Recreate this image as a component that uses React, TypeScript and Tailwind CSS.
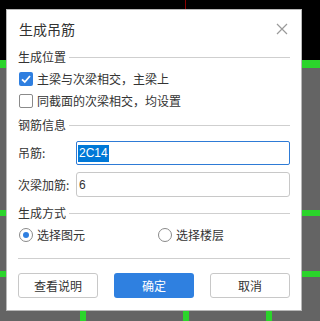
import React from "react";

const font = { fontFamily: '"Noto Sans CJK SC", "Microsoft YaHei", sans-serif' };

function Section({ title }: { title: string }) {
  return (
    <div className="flex items-center h-[18px]">
      <span className="text-[12px] leading-none text-[#333]">{title}</span>
      <div className="flex-1 h-px bg-[#cfcfcf] ml-[3px]" />
    </div>
  );
}

function Checkbox({ checked, label }: { checked?: boolean; label: string }) {
  return (
    <div className="flex items-center h-[22px]">
      {checked ? (
        <div className="ml-px w-[14px] h-[14px] rounded-[2px] bg-[#2f7fe0] flex items-center justify-center">
          <svg width="12" height="12" viewBox="0 0 12 12">
            <path d="M2 6.3 L4.8 9 L10 3" fill="none" stroke="#fff" strokeWidth="1.8" />
          </svg>
        </div>
      ) : (
        <div className="ml-px w-[14px] h-[14px] rounded-[2px] border border-[#8a8a8a] bg-white" />
      )}
      <span className="ml-[4px] text-[12px] leading-none text-[#333]">{label}</span>
    </div>
  );
}

function Radio({ checked, label }: { checked?: boolean; label: string }) {
  return (
    <div className="flex items-center h-[22px]">
      <div className="ml-px w-[14px] h-[14px] rounded-full border border-[#8a8a8a] bg-white flex items-center justify-center">
        {checked && <div className="w-[6px] h-[6px] rounded-full bg-[#2f7fe0]" />}
      </div>
      <span className="ml-[4px] text-[12px] leading-none text-[#333]">{label}</span>
    </div>
  );
}

export default function App() {
  return (
    <div className="relative w-[320px] h-[321px] overflow-hidden bg-[#646464]" style={font}>
      {/* canvas background */}
      <div className="absolute left-0 top-0 w-[320px] h-[60px] bg-black" />
      <div className="absolute left-0 top-[60px] w-[320px] h-[8px] bg-[#2bd42b]" />
      <div className="absolute left-0 top-[210px] w-[320px] h-[6px] bg-[#2bd42b]" />
      <div className="absolute left-0 top-[271px] w-[320px] h-[6px] bg-[#2bd42b]" />
      <div className="absolute left-[80px] top-[300px] w-[6px] h-[21px] bg-[#2bd42b]" />
      <div className="absolute left-[266px] top-[300px] w-[6px] h-[21px] bg-[#2bd42b]" />
      <div className="absolute left-[183px] top-[300px] w-[6px] h-[21px] bg-[#2bd42b]" />
      <div className="absolute left-[185px] top-0 w-[1px] h-[10px] bg-[#8b0000]" />

      {/* dialog */}
      <div className="absolute left-[6px] top-[9px] w-[296px] h-[302px] bg-white border border-[#b8b8b8] px-[11px] flex flex-col text-[#333]">
        <div className="flex items-center justify-between h-[39px] -mt-px">
          <span className="text-[14px] leading-none text-[#333] ml-px">生成吊筋</span>
          <svg width="12" height="12" viewBox="0 0 12 12" className="mr-[2px] mt-[1px]">
            <path d="M1 1 L11 11 M11 1 L1 11" stroke="#9a9a9a" strokeWidth="1.2" fill="none" />
          </svg>
        </div>
        <Section title="生成位置" />
        <div className="mt-[2px]">
          <Checkbox checked label="主梁与次梁相交，主梁上" />
          <Checkbox label="同截面的次梁相交，均设置" />
        </div>
        <div className="mt-[4px]">
          <Section title="钢筋信息" />
        </div>
        <div className="flex items-center mt-[7px] h-[24px]">
          <span className="w-[58px] text-[12px] leading-none">吊筋:</span>
          <div className="flex-1 h-[24px] border border-[#2e7bd6] rounded-[2px] flex items-center pl-[1px]">
            <span
              className="bg-[#0078d7] text-white text-[12px] leading-[17px] px-px"
              style={{ fontFamily: '"Liberation Sans", Arial, sans-serif' }}
            >
              2C14
            </span>
          </div>
        </div>
        <div className="flex items-center mt-[7px] h-[25px]">
          <span className="w-[58px] text-[12px] leading-none whitespace-nowrap">次梁加筋:</span>
          <div className="flex-1 h-[25px] border border-[#c8c8c8] rounded-[3px] flex items-center pl-[2px]">
            <span className="text-[12px] leading-none" style={{ fontFamily: '"Liberation Sans", Arial, sans-serif' }}>
              6
            </span>
          </div>
        </div>
        <div className="mt-[7px]">
          <Section title="生成方式" />
        </div>
        <div className="flex mt-[2px]">
          <div className="w-[139px]">
            <Radio checked label="选择图元" />
          </div>
          <Radio label="选择楼层" />
        </div>
        <div className="mt-[12px] h-px bg-[#cfcfcf]" />
        <div className="mt-[14px] flex gap-[16px]">
          <button className="w-[80px] h-[25px] rounded-[3px] border border-[#c8c8c8] bg-white text-[12px] text-[#333]">
            查看说明
          </button>
          <button className="w-[80px] h-[25px] rounded-[3px] bg-[#2f80e0] text-[12px] text-white">确定</button>
          <button className="w-[80px] h-[25px] rounded-[3px] border border-[#c8c8c8] bg-white text-[12px] text-[#333]">
            取消
          </button>
        </div>
      </div>
    </div>
  );
}
